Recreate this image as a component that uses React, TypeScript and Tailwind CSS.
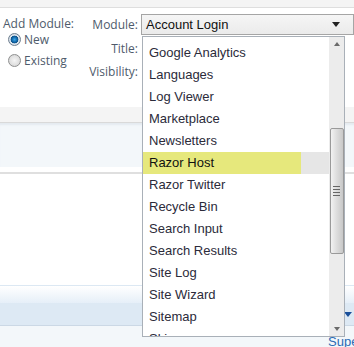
import React from 'react';

const modules = [
  'Google Analytics',
  'Languages',
  'Log Viewer',
  'Marketplace',
  'Newsletters',
  'Razor Host',
  'Razor Twitter',
  'Recycle Bin',
  'Search Input',
  'Search Results',
  'Site Log',
  'Site Wizard',
  'Sitemap',
  'Skins',
];

const Radio = ({ checked }: { checked?: boolean }) => (
  <span
    className={
      'inline-block w-[13px] h-[13px] rounded-full border ' +
      (checked
        ? 'border-[#6f7f8f] bg-[radial-gradient(circle,#3aa8ec_0%,#0d5f9e_38%,#0b4f86_46%,#dfe7ef_54%,#c3ccd6_100%)]'
        : 'border-[#8e8f8f] bg-[radial-gradient(circle,#f5f5f5_0%,#dcdcdc_70%,#c8c8c8_100%)]')
    }
  />
);

export default function App() {
  return (
    <div className="relative w-[354px] h-[347px] overflow-hidden bg-white font-['Open_Sans',sans-serif]">
      {/* page bands behind the popup */}
      <div className="h-[7px] bg-[#f4f4f4] border-b border-[#dedede] box-content" />
      <div className="h-[99px] flex text-[12px] text-[#4e5b6b] leading-none">
        <div className="w-[88px] pl-[3px] pt-[10px]">
          <div>Add Module:</div>
          <div className="flex items-center gap-[3px] mt-[3px] ml-[5px]">
            <Radio checked />
            <span>New</span>
          </div>
          <div className="flex items-center gap-[3px] mt-[8px] ml-[5px]">
            <Radio />
            <span>Existing</span>
          </div>
        </div>
        <div className="w-[50px] flex flex-col items-end pt-[11px]">
          <div>Module:</div>
          <div className="mt-[12px]">Title:</div>
          <div className="mt-[11px]">Visibility:</div>
        </div>
        <div className="ml-[3px] pt-[6px] flex-1">
          <div className="h-[21px] border border-[#a5a5a5] bg-[linear-gradient(#f5f5f5,#ebebeb)] flex items-center pl-[4px] pr-[13px] font-['Liberation_Sans',Arial,sans-serif] text-[13px] text-[#111]">
            <span className="flex-1">Account Login</span>
            <span className="w-0 h-0 border-l-[4px] border-r-[4px] border-t-[5px] border-l-transparent border-r-transparent border-t-[#222]" />
          </div>
        </div>
      </div>
      <div className="h-[15px] bg-[#f4f4f4] border-b border-[#d9d9d9] box-content" />
      <div className="h-[44px] bg-[#f3f7fa] shadow-[inset_0_3px_2px_-1px_#e4eaf0]" />
      <div className="h-[5px] bg-white" />
      <div className="h-[2px] bg-[#dfdfdf]" />
      <div className="h-[111px] bg-white" />
      <div className="h-[18px] border-t border-[#dce8f3] bg-[linear-gradient(#ffffff,#e6eff8)]" />
      <div className="h-[22px] bg-[#dde9f4] border-b border-[#cbd8e5] box-content flex justify-end items-center pr-[2px]">
        <span className="w-0 h-0 border-l-[4px] border-r-[4px] border-t-[5px] border-l-transparent border-r-transparent border-t-[#1a4f9a]" />
      </div>
      <div className="h-[30px] bg-[#f3f7fa] pt-[9px] pl-[328px] font-['Liberation_Sans',Arial,sans-serif] text-[13px] text-[#2a6bb5] whitespace-nowrap leading-none">
        Super
      </div>

      {/* open dropdown list */}
      <div className="absolute left-[142px] top-[36px] w-[203px] h-[301px] border border-[#a9b0b8] bg-white flex font-['Liberation_Sans',Arial,sans-serif] text-[13px] text-[#2b2b3a]">
        <div className="flex-1 pt-[5px] overflow-hidden">
          {modules.map(m =>
            m === 'Razor Host' ? (
              <div key={m} className="h-[22px] bg-[#e6e6e6] flex">
                <div className="w-[158px] bg-[#e6e87c] flex items-center pl-[6px] text-[#111]">{m}</div>
              </div>
            ) : (
              <div key={m} className="h-[22px] flex items-center pl-[6px]">{m}</div>
            )
          )}
        </div>
        <div className="w-[15px] bg-[#ececec] flex flex-col items-center">
          <div className="h-[13px] flex items-center justify-center">
            <span className="w-0 h-0 border-l-[3.5px] border-r-[3.5px] border-b-[4px] border-l-transparent border-r-transparent border-b-[#6a6a6a]" />
          </div>
          <div className="mt-[78px] w-[14px] h-[126px] rounded-[2px] border border-[#9a9a9a] bg-[linear-gradient(90deg,#f2f2f2,#dcdcdc_50%,#c8c8c8)] flex flex-col items-center justify-center gap-[2px]">
            <span className="w-[7px] h-[1px] bg-[#666]" />
            <span className="w-[7px] h-[1px] bg-[#666]" />
            <span className="w-[7px] h-[1px] bg-[#666]" />
            <span className="w-[7px] h-[1px] bg-[#666]" />
          </div>
          <div className="flex-1" />
          <div className="h-[14px] flex items-center justify-center">
            <span className="w-0 h-0 border-l-[3.5px] border-r-[3.5px] border-t-[4px] border-l-transparent border-r-transparent border-t-[#6a6a6a]" />
          </div>
        </div>
      </div>
    </div>
  );
}
